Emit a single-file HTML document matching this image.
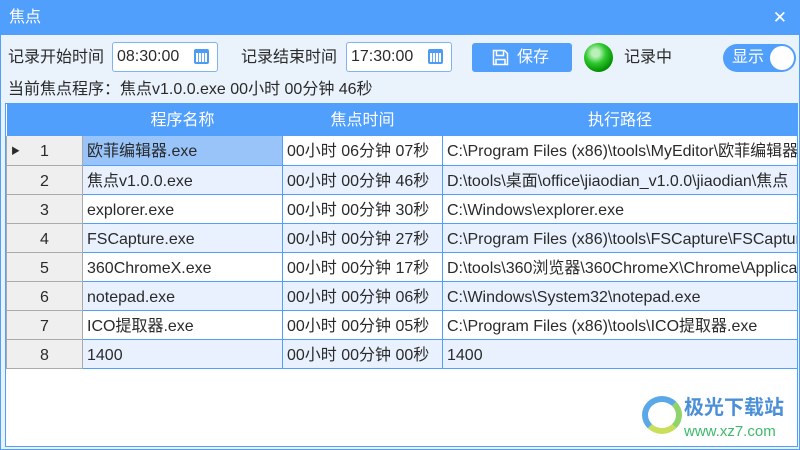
<!DOCTYPE html><html><head><meta charset="utf-8"><style>
*{margin:0;padding:0;box-sizing:border-box}
body{width:800px;height:450px;overflow:hidden;background:#eaf2fc;font-family:"Liberation Sans","Noto Sans CJK SC",sans-serif;font-size:16px;color:#2a2a2a;position:relative}
.title{position:absolute;left:0;top:0;width:800px;height:35px;background:#519ffd;color:#fff;font-size:16px;line-height:35px;padding-left:9px}
.x{position:absolute;right:13px;top:0;font-size:17px;color:#fff;font-weight:300}
.frame{position:absolute;left:0;top:35px;width:800px;height:415px;border:1px solid #519ffd;border-top:none}
.t{position:absolute;white-space:nowrap;line-height:20px}
.inp{position:absolute;height:30px;background:#fff;border:1px solid #7fb2f0;border-radius:3px;padding-left:4px;line-height:28px;font-size:16px}
.cal{position:absolute;right:8px;top:6px;width:15px;height:15px;border:2px solid #4c9cf5;border-top-width:4px;border-radius:2px;background:repeating-linear-gradient(90deg,#fff 0 2px,#6aaaf5 2px 3px)}
.btn{position:absolute;left:472px;top:43px;width:100px;height:29px;background:#519ffd;border-radius:3px;color:#fff;line-height:29px;padding-left:45px}
.grid{position:absolute;left:5px;top:103px;width:793px;height:344px;background:#fff;border:1px solid #519ffd;overflow:hidden}
table{border-collapse:collapse;position:absolute;left:0;top:0;width:791px;table-layout:fixed}
th{background:#519ffd;color:#fff;font-weight:normal;height:32px;line-height:30px;font-size:16px;padding:2px 0 0}
td{height:29px;line-height:25px;vertical-align:middle;border:1px solid #519ffd;border-top:none;padding:3px 0 0 4px;white-space:nowrap;overflow:hidden;font-size:16px}
td:last-child{border-right:none}
td.n{background:#efefef;border-color:#aaa;text-align:center;padding:3px 0 0;position:relative}
tr.e td{background:#e8f1fd}
tr.e td.n{background:#efefef}
</style></head><body>
<div class="title">焦点<span class="x">✕</span></div>
<div class="frame"></div>
<div class="t" style="left:8px;top:48px">记录开始时间</div>
<div class="inp" style="left:112px;top:42px;width:106px">08:30:00<div class="cal"></div></div>
<div class="t" style="left:241px;top:48px">记录结束时间</div>
<div class="inp" style="left:346px;top:42px;width:106px">17:30:00<div class="cal"></div></div>
<div class="btn"><svg style="position:absolute;left:20px;top:6px" width="17" height="17" viewBox="0 0 17 17"><path d="M1.5 1.5h11l3 3v11h-14z M4.5 1.5v5h7v-5 M4 15.5v-5h9v5" fill="none" stroke="#fff" stroke-width="1.5"/></svg>保存</div>
<div style="position:absolute;left:584px;top:43px;width:29px;height:29px;border-radius:50%;background:radial-gradient(circle at 40% 35%,#b8f0b8 0 15%,#2fc92f 40%,#008a00 75%,#005500)"></div>
<div class="t" style="left:624px;top:48px">记录中</div>
<div style="position:absolute;left:723px;top:44px;width:73px;height:28px;border-radius:14px;background:#519ffd;color:#fff;line-height:28px;padding-left:9px">显示<div style="position:absolute;right:2px;top:2px;width:24px;height:24px;border-radius:50%;background:#fff"></div></div>
<div class="t" style="left:8px;top:80px">当前焦点程序：焦点v1.0.0.exe 00小时 00分钟 46秒</div>
<div class="grid"><table>
<colgroup><col style="width:76px"><col style="width:200px"><col style="width:160px"><col style="width:355px"></colgroup>
<tr><th></th><th>程序名称</th><th>焦点时间</th><th>执行路径</th></tr>
<tr><td class="n"><span style="position:absolute;left:4px;top:3px;font-size:9px">▶</span>1</td><td style="background:#99c4fa">欧菲编辑器.exe</td><td>00小时 06分钟 07秒</td><td>C:\Program Files (x86)\tools\MyEditor\欧菲编辑器</td></tr>
<tr class="e"><td class="n">2</td><td>焦点v1.0.0.exe</td><td>00小时 00分钟 46秒</td><td>D:\tools\桌面\office\jiaodian_v1.0.0\jiaodian\焦点</td></tr>
<tr><td class="n">3</td><td>explorer.exe</td><td>00小时 00分钟 30秒</td><td>C:\Windows\explorer.exe</td></tr>
<tr class="e"><td class="n">4</td><td>FSCapture.exe</td><td>00小时 00分钟 27秒</td><td>C:\Program Files (x86)\tools\FSCapture\FSCapture</td></tr>
<tr><td class="n">5</td><td>360ChromeX.exe</td><td>00小时 00分钟 17秒</td><td>D:\tools\360浏览器\360ChromeX\Chrome\Application</td></tr>
<tr class="e"><td class="n">6</td><td>notepad.exe</td><td>00小时 00分钟 06秒</td><td>C:\Windows\System32\notepad.exe</td></tr>
<tr><td class="n">7</td><td>ICO提取器.exe</td><td>00小时 00分钟 05秒</td><td>C:\Program Files (x86)\tools\ICO提取器.exe</td></tr>
<tr class="e"><td class="n">8</td><td>1400</td><td>00小时 00分钟 00秒</td><td>1400</td></tr>
</table>
<div style="position:absolute;left:636px;top:292px;width:40px;height:38px;border-radius:50%;border:6px solid #5aa8e8;border-right-color:#8fd46a;border-bottom-color:#c9de5a"></div>
<div class="t" style="left:678px;top:294px;font-size:20px;font-weight:bold;color:#4a8fd8">极光下载站</div>
<div class="t" style="left:678px;top:318px;font-size:15px;color:#3cba6a">www.xz7.com</div>
</div>
</body></html>
